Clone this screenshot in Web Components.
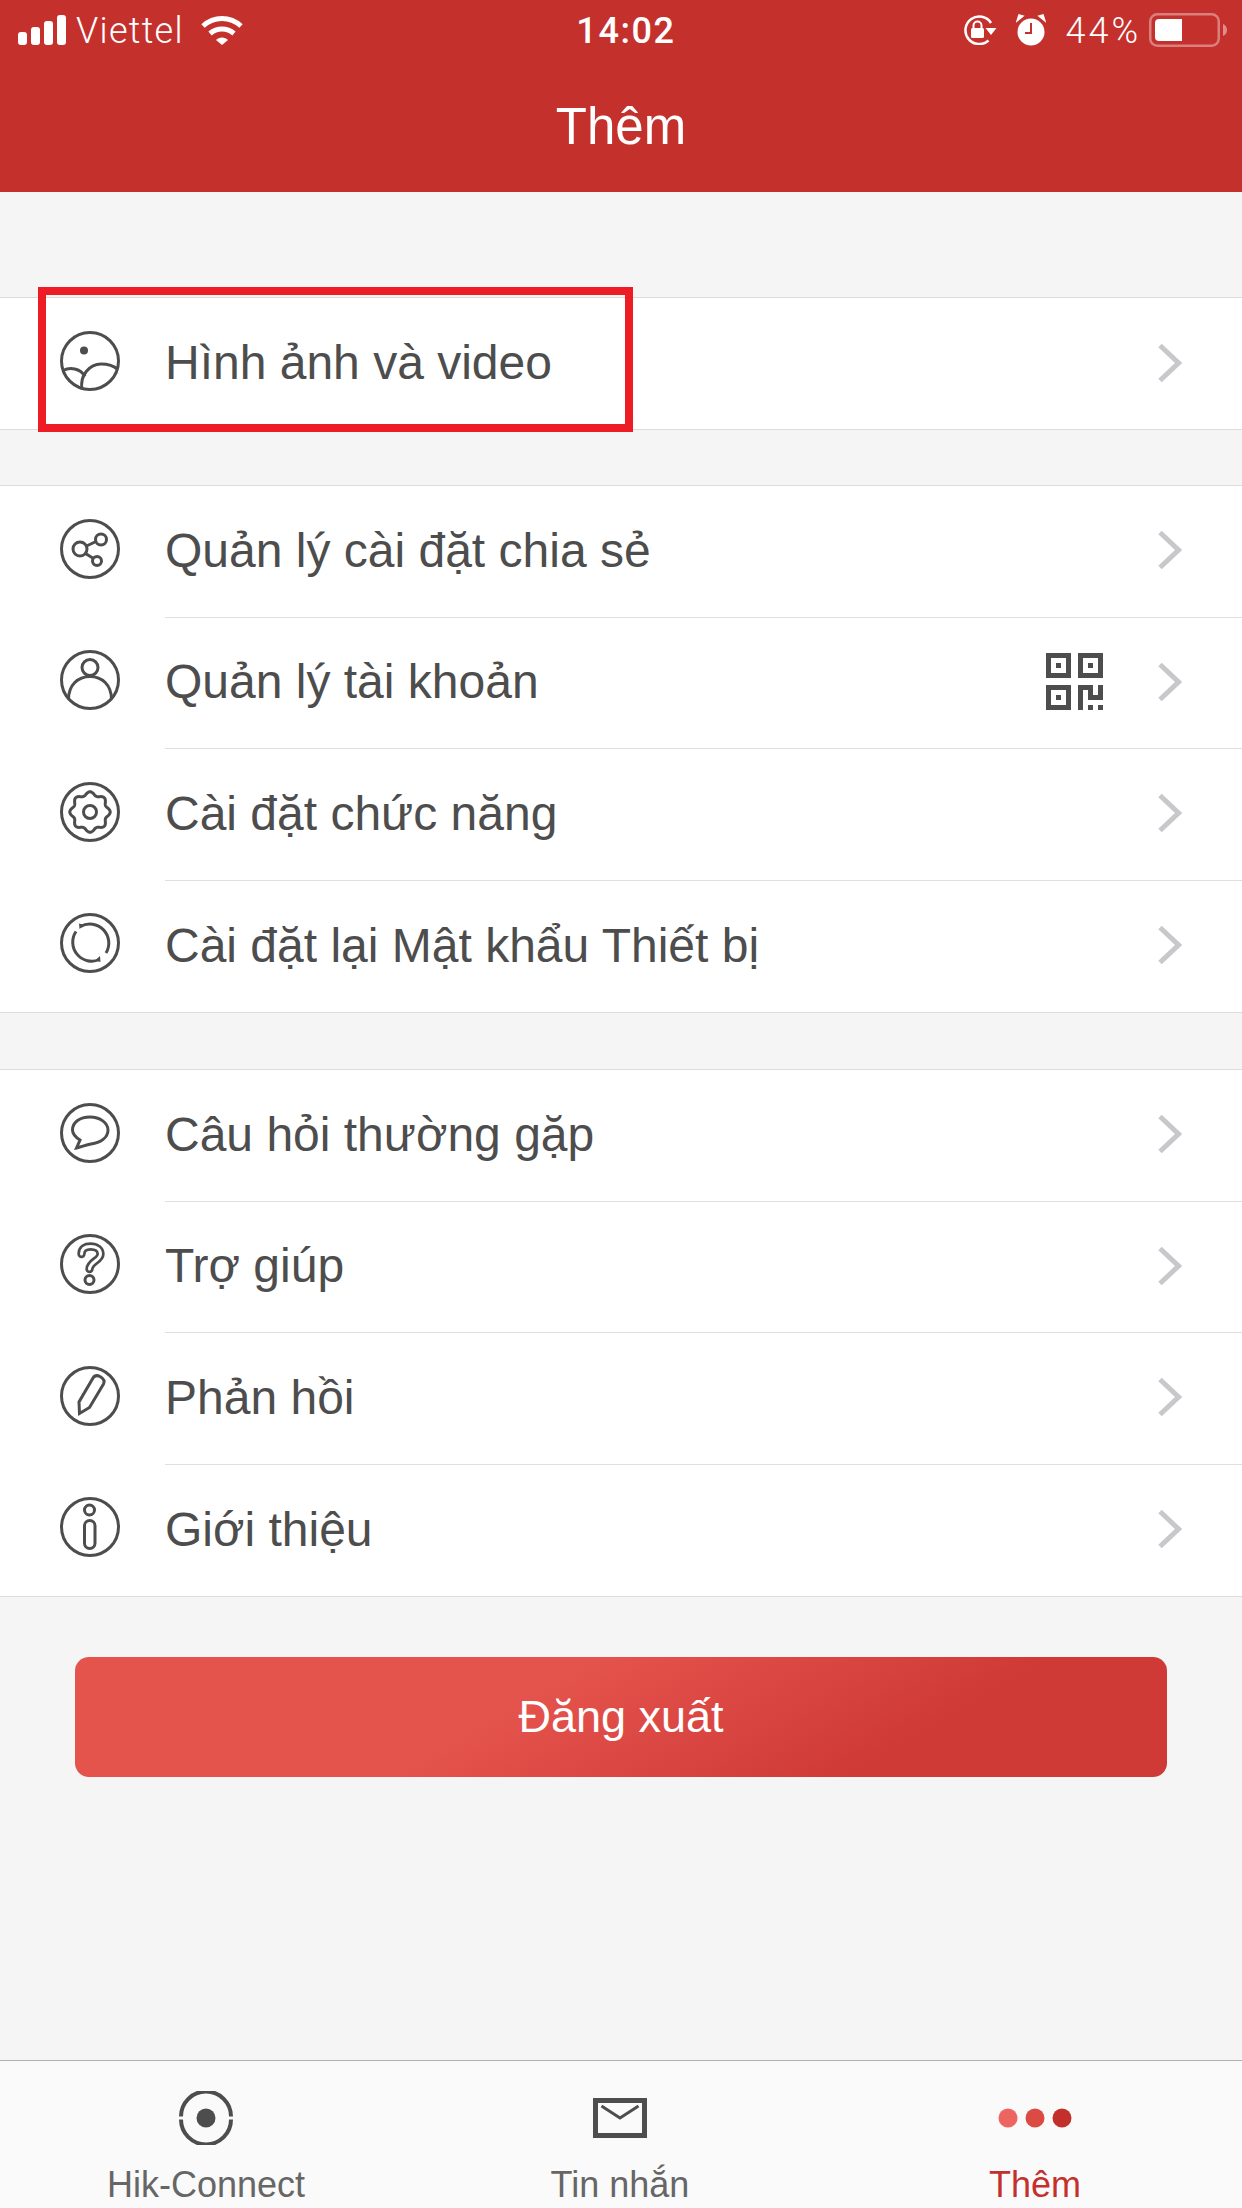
<!DOCTYPE html>
<html lang="vi">
<head>
<meta charset="utf-8">
<title>Thêm</title>
<style>
    html, body { margin: 0; padding: 0; }
    body { font-family: "Liberation Sans", Arial, sans-serif; background: #f5f5f5; }
</style>
</head>
<body>
<app-screen>
    <status-bar slot="top"></status-bar>
    <app-header slot="top">Thêm</app-header>

    <menu-group style="margin-top:105px">
        <menu-row icon="photo" last style="height:131px">Hình ảnh và video</menu-row>
        <mark-box></mark-box>
    </menu-group>

    <menu-group style="margin-top:55px">
        <menu-row icon="share">Quản lý cài đặt chia sẻ</menu-row>
        <menu-row icon="user" qr>Quản lý tài khoản</menu-row>
        <menu-row icon="gear">Cài đặt chức năng</menu-row>
        <menu-row icon="reset" last>Cài đặt lại Mật khẩu Thiết bị</menu-row>
    </menu-group>

    <menu-group style="margin-top:56px">
        <menu-row icon="chat">Câu hỏi thường gặp</menu-row>
        <menu-row icon="help">Trợ giúp</menu-row>
        <menu-row icon="pen">Phản hồi</menu-row>
        <menu-row icon="info" last>Giới thiệu</menu-row>
    </menu-group>

    <logout-button>Đăng xuất</logout-button>

    <tab-bar slot="bottom">
        <tab-item icon="hik">Hik-Connect</tab-item>
        <tab-item icon="mail">Tin nhắn</tab-item>
        <tab-item icon="dots" active>Thêm</tab-item>
    </tab-bar>
</app-screen>

<script>
    // small helper, every element below just sets its shadow html once
    function shadow(el, html) {
        el.attachShadow({ mode: 'open' }).innerHTML = html;
    }

    // wavy gear outline for the settings icon
    function gearPath() {
        let d = '';
        for (let i = 0; i <= 240; i++) {
            const a = i / 240 * Math.PI * 2;
            const r = 18.5 + 1.7 * Math.cos(a * 8);
            d += (i ? 'L' : 'M') + (30 + r * Math.cos(a)).toFixed(2) + ' ' + (30 + r * Math.sin(a)).toFixed(2);
        }
        return d + 'Z';
    }

    const RING = '<circle cx="30" cy="30" r="28.5"/>';
    const ICONS = {
        photo: RING + '<circle cx="24" cy="19.5" r="4" fill="#4d4d4d" stroke="none"/><path d="M22 58.5C19.5 44 30 33 41 33C48 33 54 35 58 38.5"/><path d="M3 39.5C10 36 20 37 25 45.5"/>',
        share: RING + '<circle cx="20" cy="30" r="7"/><circle cx="41" cy="20.5" r="5.5"/><circle cx="37" cy="42" r="4.5"/><path d="M26.5 27L36 22.5M25.5 34.5L33.5 39.5"/>',
        user: RING + '<circle cx="30" cy="17.5" r="8"/><path d="M8.5 49.5C8.5 35 18 26.5 30 26.5C42 26.5 51.5 35 51.5 49.5"/>',
        gear: RING + '<path d="' + gearPath() + '"/><circle cx="30" cy="30" r="6.5"/>',
        reset: RING + '<path d="M20.500 13.500A19 19 0 0 1 46 40"/><path d="M39.500 46.500A19 19 0 0 1 16 18.500"/><path d="M19 10.500L24.500 12L19.500 16Z" fill="#4d4d4d" stroke="none"/><path d="M40 43L40.500 49L35 47.500Z" fill="#4d4d4d" stroke="none"/>',
        chat: RING + '<path d="M16.500 45L20 37C14.500 33.500 12.500 30 12.500 27C12.500 19 20 14 30 14C40 14 48 20 48 27C48 35 40 39.500 31 41C26 42 21 44 16.500 45Z"/>',
        help: RING + '<path d="M21.500 20C21.500 14.500 25.500 12.500 30.500 12.500C36.500 12.500 40.500 15.500 40.500 20C40.500 26.500 30 27.500 29.500 35" stroke-width="8.400" stroke-linecap="round"/><path d="M21.500 20C21.500 14.500 25.500 12.500 30.500 12.500C36.500 12.500 40.500 15.500 40.500 20C40.500 26.500 30 27.500 29.500 35" stroke="#fff" stroke-width="3" stroke-linecap="round"/><circle cx="29.500" cy="46" r="4.500"/>',
        pen: RING + '<path d="M19.500 47.500L19 36L33 12C34.500 9.500 37 9 40 10.500C43.500 12.500 45 15 43.500 18L29.500 41.500Z"/>',
        info: RING + '<circle cx="29.500" cy="13" r="5"/><rect x="24.500" y="23.500" width="10.500" height="28" rx="5.250"/>'
    };

    class AppScreen extends HTMLElement {
        constructor() {
            super();
            shadow(this, `
                <style>
                    :host { display: flex; flex-direction: column; height: 2208px; overflow: hidden; background: #f5f5f5; }
                    main { flex: 1; }
                </style>
                <slot name="top"></slot>
                <main><slot></slot></main>
                <slot name="bottom"></slot>`);
        }
    }

    class StatusBar extends HTMLElement {
        constructor() {
            super();
            shadow(this, `
                <style>
                    :host { display: grid; grid-template-columns: 1fr auto 1fr; align-items: center; height: 60px; background: #c4312d; color: #fff;
                        font: 300 36px Roboto, "Liberation Sans", sans-serif; }
                    div { display: flex; align-items: center; }
                    span, .time { position: relative; top: 1px; }
                    .left { padding-left: 18px; }
                    .carrier { margin-left: 10px; margin-right: 17px; letter-spacing: 1.300px; }
                    .time { font-weight: 500; padding-left: 10px; letter-spacing: 1.600px; }
                    .right { justify-content: flex-end; padding-right: 15px; }
                    .pct { margin: 0 8px 0 19px; letter-spacing: 3px; }
                    svg { display: block; }
                    .alarm { margin-left: 19px; }
                </style>
                <div class="left">
                    <svg width="48" height="30" viewBox="0 0 48 30" fill="#fff"><rect y="17" width="9" height="13" rx="3"/><rect x="13" y="12" width="9" height="18" rx="3"/><rect x="26" y="6" width="9" height="24" rx="3"/><rect x="39" y="0" width="9" height="30" rx="3"/></svg>
                    <span class="carrier">Viettel</span>
                    <svg width="42" height="30" viewBox="0 0 42 30" fill="none" stroke="#fff" stroke-width="5"><path d="M2 11C13 1 29 1 40 11"/><path d="M9 18.500C16 12.500 26 12.500 33 18.500"/><path d="M15 25L21 30L27 25C24 21.500 18 21.500 15 25Z" fill="#fff" stroke="none"/></svg>
                </div>
                <div class="time">14:02</div>
                <div class="right">
                    <svg width="34" height="30" viewBox="0 0 34 30" fill="none" stroke="#fff" stroke-width="2.500"><path d="M25.500 25.500A13.800 13.800 0 1 1 28 8"/><path d="M22.500 13H33.500L28 20Z" fill="#fff" stroke="none"/><rect x="8" y="13" width="13" height="10" rx="1.500" fill="#fff" stroke="none"/><path d="M10.500 14V10.500A4 4 0 0 1 18.500 10.500V14" stroke-width="2"/></svg>
                    <svg class="alarm" width="30" height="32" viewBox="0 0 30 32" fill="#fff"><circle cx="15" cy="18" r="13.500"/><path d="M1 7L7 2L3 1ZM29 7L23 2L27 1Z" stroke="#fff" stroke-width="1.500"/><path d="M15 9V19H9" fill="none" stroke="#c4312d" stroke-width="2"/></svg>
                    <span class="pct">44%</span>
                    <svg width="78" height="34" viewBox="0 0 78 34"><rect x="1.250" y="1.250" width="68.500" height="31.500" rx="7" fill="none" stroke="#fff" stroke-opacity=".38" stroke-width="2.500"/><path d="M6 10a4 4 0 0 1 4-4H33V28H10a4 4 0 0 1-4-4Z" fill="#fff"/><path d="M74 11C76.500 12 78 14 78 17C78 20 76.500 22 74 23Z" fill="#fff" fill-opacity=".45"/></svg>
                </div>`);
        }
    }

    class AppHeader extends HTMLElement {
        constructor() {
            super();
            shadow(this, `
                <style>
                    :host { display: flex; align-items: center; justify-content: center; height: 132px; background: #c4312d; color: #fff; font: 51px "Liberation Sans", Arial, sans-serif; }
                </style>
                <slot></slot>`);
        }
    }

    class MenuGroup extends HTMLElement {
        constructor() {
            super();
            shadow(this, `
                <style>
                    :host { display: block; position: relative; background: #fff; border-top: 1px solid #dcdcdc; border-bottom: 1px solid #dcdcdc; }
                </style>
                <slot></slot>`);
        }
    }

    class MenuRow extends HTMLElement {
        constructor() {
            super();
            const qr = this.hasAttribute('qr') ? '<qr-mark></qr-mark>' : '';
            const line = this.hasAttribute('last') ? 'none' : '1px solid #e0e0e0';
            shadow(this, `
                <style>
                    :host { display: flex; align-items: stretch; height: 131.5px; color: #4d4d4d; font: 48px "Liberation Sans", Arial, sans-serif; }
                    .lead { width: 165px; display: flex; align-items: center; padding-left: 60px; box-sizing: border-box; padding-bottom: 6px; }
                    .body { flex: 1; display: flex; align-items: center; border-bottom: ${line}; padding-right: 60px; box-sizing: border-box; }
                    .label { flex: 1; padding-bottom: 2px; }
                    qr-mark { margin-right: 55px; margin-bottom: 2px; }
                    svg.chev { display: block; margin-bottom: 2px; }
                </style>
                <div class="lead"><hik-icon name="${this.getAttribute('icon')}"></hik-icon></div>
                <div class="body">
                    <span class="label"><slot></slot></span>
                    ${qr}
                    <svg class="chev" width="24" height="40" viewBox="0 0 24 40" fill="none" stroke="#c8c8cc" stroke-width="5"><path d="M2 2.500L20.500 20L2 37.500"/></svg>
                </div>`);
        }
    }

    class HikIcon extends HTMLElement {
        constructor() {
            super();
            shadow(this, `
                <style>
                    :host { display: block; width: 60px; height: 60px; }
                    svg { display: block; fill: none; stroke: #4d4d4d; stroke-width: 3; }
                </style>
                <svg width="60" height="60" viewBox="0 0 60 60">${ICONS[this.getAttribute('name')]}</svg>`);
        }
    }

    class QrMark extends HTMLElement {
        constructor() {
            super();
            shadow(this, `
                <style>
                    :host { display: block; width: 57px; height: 57px; }
                    svg { display: block; }
                </style>
                <svg width="57" height="57" viewBox="0 0 57 57" fill="#4d4d4d">
                    <path fill-rule="evenodd" d="M0 0H25V25H0ZM5 5V20H20V5Z"/><rect x="10" y="10" width="5" height="5"/>
                    <path fill-rule="evenodd" d="M32 0H57V25H32ZM37 5V20H52V5Z"/><rect x="42" y="10" width="5" height="5"/>
                    <path fill-rule="evenodd" d="M0 32H25V57H0ZM5 37V52H20V37Z"/><rect x="10" y="42" width="5" height="5"/>
                    <path d="M32 32H47V42H52V32H57V47H42V37H37V57H32Z"/><rect x="42" y="52" width="5" height="5"/><rect x="52" y="52" width="5" height="5"/>
                </svg>`);
        }
    }

    // the red annotation frame lying over the first row
    class MarkBox extends HTMLElement {
        constructor() {
            super();
            shadow(this, `
                <style>
                    :host { position: absolute; left: 38px; top: -11px; width: 595px; height: 145px; box-sizing: border-box; border: 8px solid #ee1c25; }
                </style>`);
        }
    }

    class LogoutButton extends HTMLElement {
        constructor() {
            super();
            shadow(this, `
                <style>
                    :host { display: flex; align-items: center; justify-content: center; height: 120px; margin: 60px 75px 0; border-radius: 14px; color: #fff;
                        background: linear-gradient(150deg, #e5534d 0%, #e5534d 40%, #cf3a36 75%, #cf3a36 100%); font: 45px "Liberation Sans", Arial, sans-serif; }
                </style>
                <slot></slot>`);
        }
    }

    class TabBar extends HTMLElement {
        constructor() {
            super();
            shadow(this, `
                <style>
                    :host { display: grid; grid-template-columns: 412px 416px 414px; height: 147px; background: #fafafa; border-top: 1px solid #b0b0b0; }
                </style>
                <slot></slot>`);
        }
    }

    class TabItem extends HTMLElement {
        constructor() {
            super();
            const on = this.hasAttribute('active');
            const pics = {
                hik: '<svg width="54" height="54" viewBox="0 0 54 54" fill="none" stroke="#4d4d4d" stroke-width="4"><path d="M2 25.500A25 25 0 0 1 52 25.500M2 28.500A25 25 0 0 0 52 28.500"/><circle cx="27" cy="27" r="9.500" fill="#4d4d4d" stroke="none"/></svg>',
                mail: '<svg width="54" height="40" viewBox="0 0 54 40" fill="none" stroke="#4d4d4d"><rect x="2.500" y="2.500" width="49" height="35" stroke-width="5"/><path d="M8.500 8L27 20L45.500 8" stroke-width="3"/></svg>',
                dots: '<svg width="74" height="20" viewBox="0 0 74 20"><circle cx="10" cy="10" r="9.500" fill="#ee6460"/><circle cx="37" cy="10" r="9.500" fill="#dc4a44"/><circle cx="64" cy="10" r="9.500" fill="#c3302c"/></svg>'
            };
            shadow(this, `
                <style>
                    :host { display: flex; flex-direction: column; align-items: center; color: ${on ? '#c4312d' : '#666'}; font: 36px "Liberation Sans", Arial, sans-serif; }
                    .pic { height: 54px; margin-top: 30px; display: flex; align-items: center; justify-content: center; }
                    svg { display: block; }
                    .txt { margin-top: 18px; line-height: 44px; white-space: nowrap; }
                </style>
                <div class="pic">${pics[this.getAttribute('icon')]}</div>
                <div class="txt"><slot></slot></div>`);
        }
    }

    customElements.define('app-screen', AppScreen);
    customElements.define('status-bar', StatusBar);
    customElements.define('app-header', AppHeader);
    customElements.define('menu-group', MenuGroup);
    customElements.define('hik-icon', HikIcon);
    customElements.define('qr-mark', QrMark);
    customElements.define('menu-row', MenuRow);
    customElements.define('mark-box', MarkBox);
    customElements.define('logout-button', LogoutButton);
    customElements.define('tab-item', TabItem);
    customElements.define('tab-bar', TabBar);
</script>
</body>
</html>
